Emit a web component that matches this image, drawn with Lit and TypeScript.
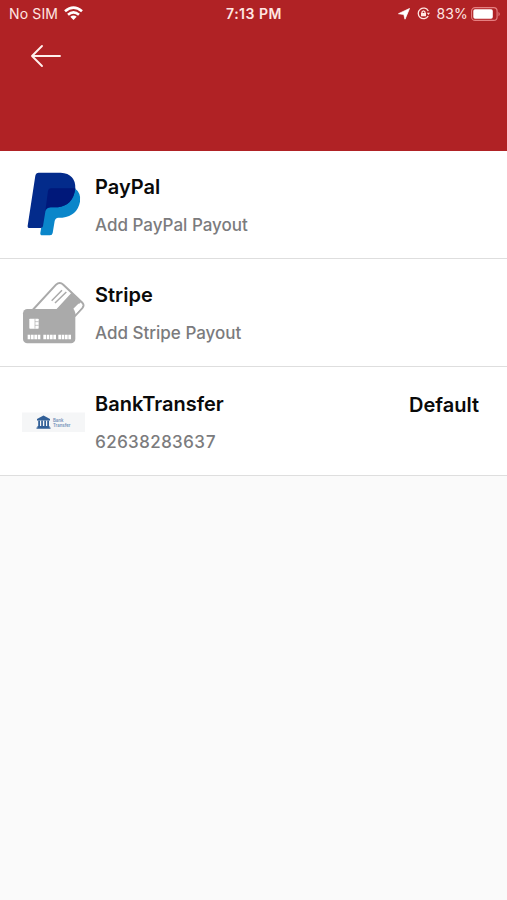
import { LitElement, html, css, svg } from "lit";
import { customElement, property } from "lit/decorators.js";

const payPalLogo = svg`
  <g transform="translate(-2 14) scale(.3333)">
    <path fill="#0a86ca" d="M164 70 Q184 84 180 110 Q172 152 127 158 H115 Q106 159 104 168 L98 204 Q97 211 90 211 H67 Q60 211 61 204 L74 126 L100 90 Z"/>
    <path fill="#032b8b" d="M56 23 H122 Q167 26 166 70 Q160 121 114 127 H92 Q78 128 76 140 L69 183 Q68 189 62 189 H29 Q22 189 23 182 L46 32 Q48 23 56 23 Z"/>
    <path fill="#00187a" d="M92 70 H166 Q160 121 114 127 H92 Q79 128 76 138 L84 78 Q85 70 92 70 Z"/>
  </g>
`;

const cardsIcon = svg`
  <g transform="translate(-4 19) scale(.3333)">
    <path d="M44 96 L114 20 Q125 10 136 20 L193 74 Q200 82 193 90 L170 115" fill="#fff" stroke="#aaa" stroke-width="6"/>
    <path d="M160 45 L189 72 L160 103 V96 H113 Z" fill="#aaa"/>
    <path d="M181 77 L192 78 Q196 82 191 88 L172 109 V99 Q170 94 166 92 Z" fill="#fff"/>
    <path d="M101 68 L132 37 M111 75 L145 42" stroke="#aaa" stroke-width="4.500" fill="none"/>
    <rect x="15" y="93" width="157" height="103" rx="13" fill="#aaa"/>
    <rect x="34" y="122" width="28" height="30" rx="2" fill="#fff"/>
    <path d="M51 131 H62 M51 142 H62 M51 122 V152" stroke="#aaa" stroke-width="2"/>
    <path d="M29 177 H67.500 M76 177 H114.500 M121 177 H159.500" stroke="#fff" stroke-width="13" stroke-dasharray="8 2" fill="none"/>
  </g>
`;

const bankBadge = svg`
  <rect x="0" y="44.500" width="63" height="19.500" fill="#f5f6f7"/>
  <g fill="#315f97" transform="translate(0 -.5)">
    <path d="M15 51.500 L21.500 48 L28 51.500 V53 H15 Z"/>
    <path d="M16.200 53 H18 V59 H16.200 Z M19.200 53 H20.900 V59 H19.200 Z M22.300 53 H24 V59 H22.300 Z M25.200 53 H27 V59 H25.200 Z M15.500 58.500 H27.500 V60 H15.500 Z M14.500 60 H28.500 V61.300 H14.500 Z"/>
  </g>
  <g class="badge-text"><text x="31" y="53.800">Bank</text><text x="31" y="59.200">Transfer</text></g>
`;

@customElement("status-bar")
class StatusBar extends LitElement {
  static styles = css`
    :host { display: grid; grid-template-columns: 1fr auto 1fr; align-items: center; height: 27px; padding: 0 6px 0 9px; color: #ffe6e2; font: 400 14px/27px Inter, "Liberation Sans", sans-serif; }
    .side { display: flex; align-items: center; }
    .label { letter-spacing: .15px; }
    .end { justify-content: flex-end; }
    .time { font-weight: 600; font-size: 14px; letter-spacing: .5px; margin-left: -2px; }
    svg { display: block; }
    .wifi { margin-left: 6px; }
    .lock { margin: 0 6px 0 7px; }
    .battery { margin-left: 3px; }
  `;
  render() {
    return html`
      <div class="side"><span class="label">No SIM</span>
        <svg class="wifi" width="19" height="15" viewBox="0 0 19 15" fill="none" stroke="#fff" stroke-width="2.700"><path d="M1 5.200 Q9.500 -1.800 18 5.200 M4 8.700 Q9.500 4.200 15 8.700"/><path d="M6.300 10.700 Q9.500 8.200 12.700 10.700 L9.500 14 Z" fill="#fff" stroke="none"/></svg>
      </div>
      <span class="time">7:13 PM</span>
      <div class="side end">
        <svg width="12" height="12" viewBox="0 0 12 12"><path fill="#fff" d="M11.500 .5 L7 11.200 L5.800 6.400 L.5 5.700 Z" stroke="#fff" stroke-width=".8" stroke-linejoin="round"/></svg>
        <svg class="lock" width="13" height="13" viewBox="0 0 13 13" fill="none" stroke="#ffe6e2" stroke-width="1.300"><path d="M11.300 4 A5.300 5.300 0 1 0 11.200 9"/><path d="M9.800 5.800 H13 L11.500 8 Z M4 6 H9 V9.300 H4 Z" fill="#ffe6e2" stroke="none"/><path d="M5 6.200 V5 Q6.500 2.600 8 5 V6.200"/></svg>
        <span class="label">83%</span>
        <svg class="battery" width="30" height="14" viewBox="0 0 30 14"><rect x=".6" y=".6" width="25.500" height="12.800" rx="3.500" fill="none" stroke="#e58082" stroke-width="1.100"/><rect x="2.300" y="2.300" width="19.500" height="9.400" rx="1.700" fill="#fff"/><path d="M27.500 4.700 Q30 7 27.500 9.300 Z" fill="#e58082"/></svg>
      </div>`;
  }
}

@customElement("payout-row")
class PayoutRow extends LitElement {
  @property() name = "";
  @property() detail = "";
  @property({ attribute: false }) icon: unknown;
  @property({ type: Boolean }) preferred = false;
  static styles = css`
    :host { display: flex; box-sizing: border-box; height: 108.400px; padding: 0 28px 0 22px; border-bottom: 1px solid #dedede; background: #fff; font-family: Inter, "Liberation Sans", sans-serif; }
    .icon { flex: none; display: block; width: 66px; height: 90px; margin-top: 10.300px; }
    .copy { flex: 1; padding: 21.200px 0 0 7px; }
    .name, .default { font-size: 20px; line-height: 30px; font-weight: 600; color: #0a0a0a; white-space: nowrap; }
    .detail { margin-top: 10px; font-size: 17px; line-height: 27px; font-weight: 500; color: #7b7b7d; white-space: nowrap; font-variant-numeric: tabular-nums; }
    .default { padding-top: 22.200px; }
    .badge-text { font: 600 4.300px Inter, sans-serif; fill: #7290b8; }
  `;
  render() {
    return html`
      <svg class="icon" viewBox="0 10 66 90">${this.icon}</svg>
      <div class="copy"><div class="name">${this.name}</div><div class="detail">${this.detail}</div></div>
      ${this.preferred ? html`<div class="default">Default</div>` : ""}`;
  }
}

@customElement("app-root")
class AppRoot extends LitElement {
  static styles = css`
    :host { display: block; min-height: 900px; background: #fafafa; }
    header { height: 150.700px; background: #b02225; }
    .back { display: block; margin: 17px 0 0 30px; }
  `;
  render() {
    return html`
      <header>
        <status-bar></status-bar>
        <svg class="back" width="32" height="24" viewBox="0 0 32 24" fill="none" stroke="#fff0ed" stroke-width="1.900" stroke-linecap="round" stroke-linejoin="round"><path d="M30 12 H2 M12 2 L2 12 L12 22"/></svg>
      </header>
      <main>
        <payout-row name="PayPal" detail="Add PayPal Payout" .icon=${payPalLogo}></payout-row>
        <payout-row name="Stripe" detail="Add Stripe Payout" .icon=${cardsIcon}></payout-row>
        <payout-row name="BankTransfer" detail="62638283637" .icon=${bankBadge} preferred></payout-row>
      </main>`;
  }
}
